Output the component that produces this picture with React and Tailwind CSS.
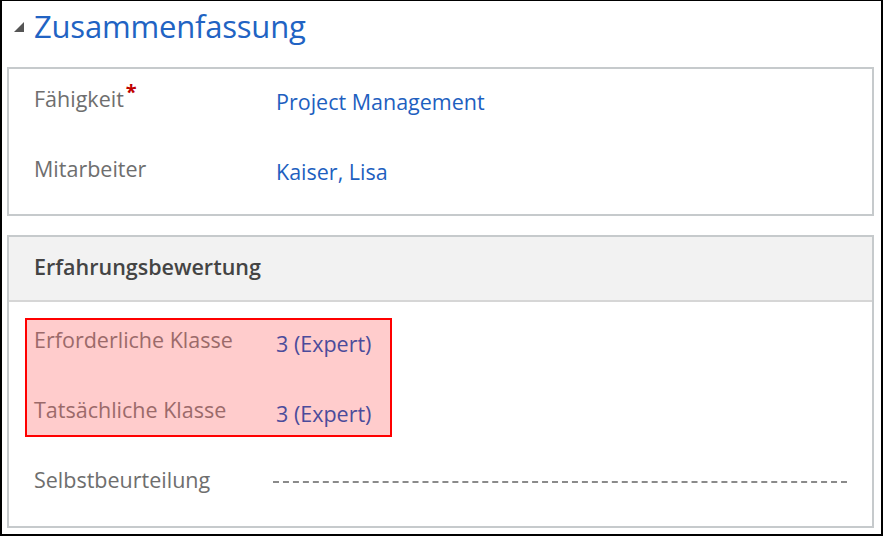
export default function App() {
  const font = { fontFamily: '"Open Sans", "Noto Sans", sans-serif' };
  return (
    <div
      className="w-[883px] h-[536px] bg-white border-l-2 border-r-2 border-b-2 border-t border-black pl-[5px] pr-[7px] box-border"
      style={font}
    >
      <div className="flex items-center h-[50px] pl-[7px]">
        <svg width="10" height="10" viewBox="0 0 10 10" className="mt-[2px]">
          <polygon points="0,10 10,10 10,0" fill="#555" />
        </svg>
        <span className="ml-[10px] text-[31px] leading-[40px] text-[#2163c3] tracking-[-0.2px]">
          Zusammenfassung
        </span>
      </div>
      <div className="mt-[16px] h-[149px] border-2 border-[#c6cacc] pt-[16px] pl-[25px]">
        <div className="flex h-[28px]">
          <div className="w-[242px] text-[21.5px] leading-[28px] text-[#6e6e6e]">
            Fähigkeit
            <span className="text-[#c00000] text-[20px] font-bold relative -top-[8px] ml-[2px]">*</span>
          </div>
          <div className="mt-[3px] text-[21.5px] leading-[28px] text-[#1e5fbf]">
            Project Management
          </div>
        </div>
        <div className="flex h-[28px] mt-[42px]">
          <div className="w-[242px] text-[21.5px] leading-[28px] text-[#6e6e6e]">
            Mitarbeiter
          </div>
          <div className="mt-[3px] text-[21.5px] leading-[28px] text-[#1e5fbf]">
            Kaiser, Lisa
          </div>
        </div>
      </div>
      <div className="mt-[19px] h-[293px] border-2 border-[#c6cacc]">
        <div className="h-[65px] bg-[#f2f2f2] border-b-2 border-[#d6d6d6] flex items-center pl-[25px]">
          <span className="text-[21.5px] font-semibold text-[#444] mt-[-2px]">
            Erfahrungsbewertung
          </span>
        </div>
        <div className="pl-[16px] pt-[16px]">
          <div className="w-[367px] h-[119px] border-2 border-[#ff0000] bg-[#ffcccc] pl-[7px] pt-[6px]">
            <div className="flex h-[28px]">
              <div className="w-[242px] text-[21.5px] leading-[28px] text-[#9b6a6a]">
                Erforderliche Klasse
              </div>
              <div className="mt-[4px] text-[21.5px] leading-[28px] text-[#4b4b9b]">
                3 (Expert)
              </div>
            </div>
            <div className="flex h-[28px] mt-[42px]">
              <div className="w-[242px] text-[21.5px] leading-[28px] text-[#9b6a6a]">
                Tatsächliche Klasse
              </div>
              <div className="mt-[4px] text-[21.5px] leading-[28px] text-[#4b4b9b]">
                3 (Expert)
              </div>
            </div>
          </div>
          <div className="flex h-[28px] mt-[29px] pl-[9px] items-center">
            <div className="w-[239px] text-[21.5px] leading-[28px] text-[#6e6e6e]">
              Selbstbeurteilung
            </div>
            <div className="flex-1 mr-[25px] mt-[4px] h-0 border-t-2 border-dashed border-[#8a8a8a]" />
          </div>
        </div>
      </div>
    </div>
  );
}
